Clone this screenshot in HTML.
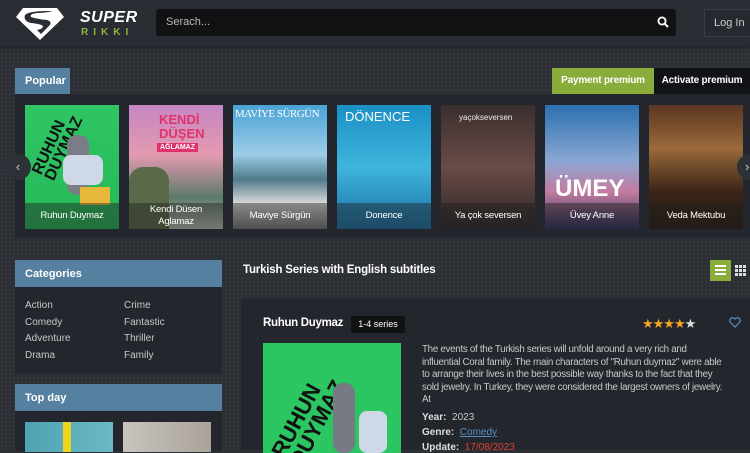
<!DOCTYPE html>
<html><head><meta charset="utf-8"><style>
*{box-sizing:border-box;margin:0;padding:0}
body{width:750px;height:450px;overflow:hidden;background:#2c2f34;font-family:"Liberation Sans",sans-serif;color:#ddd;position:relative;
background-image:radial-gradient(#34383e 1px,transparent 1.2px);background-size:4px 4px}
.hdr{position:absolute;left:0;top:0;width:750px;height:46px;background:#292c33;box-shadow:0 1px 3px #1c1e22}
.search{position:absolute;left:156px;top:9px;width:520px;height:27px;background:#111214;border-radius:3px;color:#bbb;font-size:11px;padding:7px 10px}
.login{position:absolute;left:704px;top:9px;width:60px;height:28px;border:1px solid #3a3e46;background:#26292f;color:#ccc;font-size:11px;padding:7px 9px}
.abs{position:absolute;white-space:nowrap}
.tab{background:#56809f;color:#fff;font-weight:bold;font-size:11px}
.pan{background:#23262c}
.poster{position:absolute;top:105px;width:94px;height:124px;overflow:hidden}
.poster span{position:absolute;left:0;right:0;bottom:0;height:26px;background:rgba(30,30,30,.45);color:#fff;font-size:9.5px;text-align:center;display:flex;align-items:center;justify-content:center;line-height:12px;letter-spacing:-0.2px}
.cat{font-size:10px;color:#c8c8c8;position:absolute}
</style></head><body>
<div class="hdr">
 <svg class="abs" style="left:15px;top:7px" width="50" height="33" viewBox="0 0 50 33"><path d="M8 1H42L49 10L25 33L1 10Z" fill="#fff"/><path d="M10 8Q14 4 32 4L38 4Q30 6 22 6Q14 7 16 10Q22 12 32 13Q38 15 34 19L26 27L22 23Q28 22 28 19Q26 17 16 16Q8 14 10 8Z" fill="#292c33"/></svg>
 <div class="abs" style="left:80px;top:9px;font-size:16px;font-weight:bold;font-style:italic;color:#fff;letter-spacing:0.5px">SUPER</div>
 <div class="abs" style="left:81px;top:27px;font-size:10px;font-weight:bold;color:#8ab43a;letter-spacing:5px">RIKKI</div>
 <div class="search">Serach...</div>
 <svg class="abs" style="left:657px;top:16px" width="12" height="12" viewBox="0 0 12 12"><circle cx="5" cy="5" r="3.6" stroke="#fff" stroke-width="1.8" fill="none"/><path d="M7.5 7.5L11 11" stroke="#fff" stroke-width="2"/></svg>
 <div class="login">Log In</div>
</div>
<div class="abs tab" style="left:15px;top:68px;width:55px;height:26px;padding:7px 10px">Popular</div>
<div class="abs" style="left:552px;top:68px;width:102px;height:26px;background:#8aac3a;color:#fff;font-size:10px;font-weight:bold;padding:7px 0;text-align:center;letter-spacing:-0.2px">Payment premium</div>
<div class="abs" style="left:654px;top:68px;width:96px;height:26px;background:#121316;color:#fff;font-size:10px;font-weight:bold;padding:7px 0;text-align:center;letter-spacing:-0.2px">Activate premium</div>
<div class="abs pan" style="left:15px;top:94px;width:735px;height:144px"></div>
<div class="poster" style="left:25px;background:linear-gradient(#2fc565,#27b858)"><div class="abs" style="left:6px;top:66px;font-size:16px;font-weight:900;color:#111;transform:rotate(-65deg);transform-origin:left top;line-height:14px">RUHUN<br>DUYMAZ</div><div class="abs" style="left:42px;top:30px;width:22px;height:60px;background:#7a7d86;border-radius:10px"></div><div class="abs" style="left:38px;top:50px;width:40px;height:30px;background:#cfd8e6;border-radius:8px"></div><div class="abs" style="left:55px;top:82px;width:30px;height:18px;background:#e8b83a"></div><span>Ruhun Duymaz</span></div>
<div class="poster" style="left:129px;background:linear-gradient(#c586c4,#e49ab0 40%,#5b7a6a 75%,#bfc0b5)"><div class="abs" style="left:30px;top:8px;color:#e0336c;font-weight:900;font-size:13px;line-height:14px">KENDİ<br>DÜŞEN</div><div class="abs" style="left:28px;top:38px;background:#e0336c;color:#fff;font-size:7px;padding:1px 3px;font-weight:bold">AĞLAMAZ</div><div class="abs" style="left:0;top:62px;width:40px;height:62px;background:#5a6a48;border-radius:14px 14px 0 0"></div><span>Kendi Düsen<br>Aglamaz</span></div>
<div class="poster" style="left:233px;background:linear-gradient(#4aa3d5,#9ccde8 40%,#4f7b8a 60%,#ddd 80%,#777)"><div class="abs" style="left:2px;top:3px;color:#fff;font-family:'Liberation Serif',serif;font-size:11px;letter-spacing:-0.5px">MAVİYE SÜRGÜN</div><span>Maviye Sürgün</span></div>
<div class="poster" style="left:337px;background:linear-gradient(#1a8fc4,#3fb5de 50%,#1a6fa5)"><div class="abs" style="left:8px;top:4px;color:#fff;font-size:13px">DÖNENCE</div><span>Donence</span></div>
<div class="poster" style="left:441px;background:linear-gradient(#3a2e2e,#6a4b47 50%,#2d2526)"><div class="abs" style="left:18px;top:8px;color:#eee;font-size:8px">yaçokseversen</div><span>Ya çok seversen</span></div>
<div class="poster" style="left:545px;background:linear-gradient(#2b6fb0,#8aa7d4 45%,#c47ca0 70%,#2a2e5a)"><div class="abs" style="left:10px;top:70px;color:#fff;font-size:24px;font-weight:bold">ÜMEY</div><span>Üvey Anne</span></div>
<div class="poster" style="left:649px;background:linear-gradient(#5a3520,#9a6a3a 35%,#3a2518 70%,#2a1a12)"><span>Veda Mektubu</span></div>
<div class="abs" style="left:5px;top:154px;width:26px;height:26px;border-radius:50%;background:#2e3138;color:#ccc;font-size:13px;text-align:center;line-height:26px">&#8249;</div>
<div class="abs" style="left:737px;top:154px;width:26px;height:26px;border-radius:50%;background:#2e3138;color:#ccc;font-size:13px;line-height:26px;padding-left:8px">&#8250;</div>

<div class="abs tab" style="left:15px;top:260px;width:207px;height:27px;padding:8px 10px;font-size:11px">Categories</div>
<div class="abs pan" style="left:15px;top:287px;width:207px;height:87px"></div>
<div class="cat" style="left:25px;top:300px">Action</div><div class="cat" style="left:124px;top:300px">Crime</div>
<div class="cat" style="left:25px;top:317px">Comedy</div><div class="cat" style="left:124px;top:317px">Fantastic</div>
<div class="cat" style="left:25px;top:333px">Adventure</div><div class="cat" style="left:124px;top:333px">Thriller</div>
<div class="cat" style="left:25px;top:350px">Drama</div><div class="cat" style="left:124px;top:350px">Family</div>
<div class="abs tab" style="left:15px;top:384px;width:207px;height:27px;padding:8px 10px;font-size:11px">Top day</div>
<div class="abs pan" style="left:15px;top:411px;width:207px;height:40px"></div>
<div class="abs" style="left:25px;top:422px;width:88px;height:30px;background:linear-gradient(90deg,#4ea3b3,#6cb8c4)"><div class="abs" style="left:38px;top:0;width:8px;height:30px;background:#f0d520"></div></div>
<div class="abs" style="left:123px;top:422px;width:88px;height:30px;background:linear-gradient(90deg,#c9c4bc,#a9a39a)"></div>

<div class="abs" style="left:243px;top:264px;font-size:11.5px;font-weight:bold;color:#fff;letter-spacing:-0.2px">Turkish Series with English subtitles</div>
<div class="abs" style="left:710px;top:260px;width:21px;height:21px;background:#8aac3a;padding:5px 5px"><div style="height:2px;background:#fff;margin-bottom:2px"></div><div style="height:2px;background:#fff;margin-bottom:2px"></div><div style="height:2px;background:#fff"></div></div>
<svg class="abs" style="left:735px;top:265px" width="12" height="11"><g fill="#ddd"><rect x="0" y="0" width="3" height="3"/><rect x="4" y="0" width="3" height="3"/><rect x="8" y="0" width="3" height="3"/><rect x="0" y="4" width="3" height="3"/><rect x="4" y="4" width="3" height="3"/><rect x="8" y="4" width="3" height="3"/><rect x="0" y="8" width="3" height="3"/><rect x="4" y="8" width="3" height="3"/><rect x="8" y="8" width="3" height="3"/></g></svg>
<div class="abs pan" style="left:241px;top:298px;width:509px;height:152px"></div>
<div class="abs" style="left:263px;top:317px;font-size:11.5px;font-weight:bold;color:#fff;letter-spacing:-0.3px">Ruhun Duymaz</div>
<div class="abs" style="left:351px;top:316px;width:54px;height:17px;background:#111214;color:#fff;font-size:9px;padding:3px 0;text-align:center">1-4 series</div>
<div class="abs" style="left:263px;top:343px;width:138px;height:110px;background:#2bc562;overflow:hidden"><div class="abs" style="left:6px;top:108px;font-size:22px;font-weight:900;color:#111;transform:rotate(-62deg);transform-origin:left top;line-height:20px">RUHUN<br>DUYMAZ</div><div class="abs" style="left:70px;top:40px;width:22px;height:70px;background:#777a82;border-radius:10px"></div><div class="abs" style="left:96px;top:68px;width:28px;height:42px;background:#cfd8e6;border-radius:8px"></div></div>
<div class="abs" style="left:642px;top:316px;font-size:13px;letter-spacing:-1px;color:#f5a623">★★★★<span style="color:#ddd">★</span></div>
<svg class="abs" style="left:729px;top:317px" width="12" height="11" viewBox="0 0 12 11"><path d="M6 10L1.3 5.3A2.6 2.6 0 0 1 6 2A2.6 2.6 0 0 1 10.7 5.3Z" fill="none" stroke="#5a8fc4" stroke-width="1.2"/></svg>
<div class="abs" style="left:422px;top:344px;font-size:9.8px;line-height:12.6px;color:#c8c8c8;letter-spacing:-0.3px">The events of the Turkish series will unfold around a very rich and<br>influential Coral family. The main characters of "Ruhun duymaz" were able<br>to arrange their lives in the best possible way thanks to the fact that they<br>sold jewelry. In Turkey, they were considered the largest owners of jewelry.<br>At</div>
<div class="abs" style="left:422px;top:412px;font-size:10px;color:#c8c8c8"><b style="color:#ddd">Year:</b>&nbsp; 2023</div>
<div class="abs" style="left:422px;top:427px;font-size:10px;color:#c8c8c8"><b style="color:#ddd">Genre:</b>&nbsp; <u style="color:#5a8fc4">Comedy</u></div>
<div class="abs" style="left:422px;top:442px;font-size:10px;color:#e0442f"><b style="color:#ddd">Update:</b>&nbsp; 17/08/2023</div>
</body></html>
